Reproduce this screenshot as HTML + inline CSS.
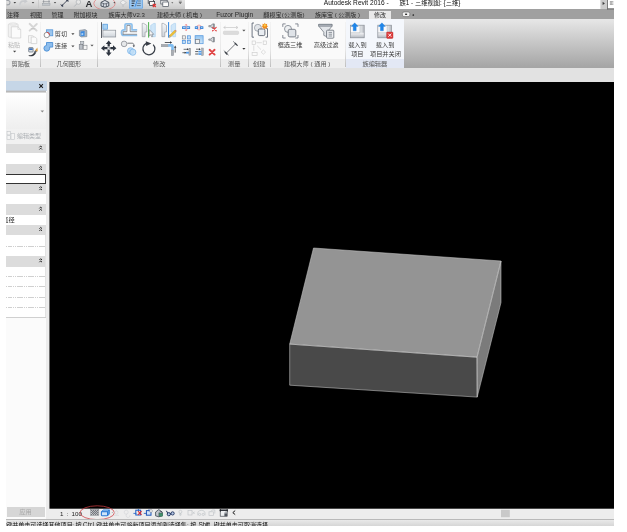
<!DOCTYPE html>
<html lang="zh-CN">
<head>
<meta charset="utf-8">
<title>Autodesk Revit 2016 - 族1 - 三维视图: {三维}</title>
<style>
html,body{margin:0;padding:0;background:#fff;}
body{width:627px;height:532px;overflow:hidden;position:relative;font-family:"Liberation Sans","Noto Sans CJK SC",sans-serif;font-size:6px;color:#222;-webkit-text-size-adjust:none;}
#app{position:absolute;left:0;top:0;width:627px;height:532px;overflow:hidden;background:#ececec;}
.abs{position:absolute;}
svg{position:absolute;overflow:visible;}
.t{position:absolute;white-space:nowrap;line-height:8px;height:8px;}
/* title bar */
#title{left:0;top:0;width:627px;height:9px;background:#fff;}
#qat{left:0;top:0;width:185px;height:9px;background:linear-gradient(#e4e4e4,#cbcbcb);}
#tabs{left:0;top:9px;width:627px;height:10.400px;background:#a0a0a0;}
#tabs .t{top:2px;color:#2a2a2a;font-size:6px;}
#ribbon{left:0;top:19.400px;width:404px;height:48.600px;background:#fafafa;}
#ribgrad{left:404px;top:19.400px;width:223px;height:48.600px;background:linear-gradient(#e7e7e7,#a4a4a4);}
#lblrow{left:0;top:59px;width:346px;height:9px;background:#eeeeee;}
#lblrow2{left:346px;top:59px;width:58px;height:9px;background:#e3e8f5;}
#fampanel{left:346px;top:19.400px;width:58px;height:39.600px;background:#f4f7fc;}
.lbl{top:60px;color:#555;font-size:6.2px;}
.rb{font-size:6.2px;color:#3c3c3c;}
.sep{position:absolute;top:22px;width:1px;height:45px;background:linear-gradient(to bottom,#f3f3f3 0%,#e9e9e9 60%,#d2d2d2 82%,#bebebe 100%);}
#optbar{left:0;top:68px;width:627px;height:14px;background:#e2e2e2;}
#view{left:49px;top:82px;width:578px;height:427px;background:#000;}
#panel{left:0;top:81px;width:47px;height:438px;background:#fbfbfb;}
#vcb{left:49px;top:509px;width:578px;height:10px;background:#ededed;}
#status{left:0;top:519px;width:627px;height:7px;background:linear-gradient(#e9e9e9,#d6d6d6);border-top:1px solid #b9b9b9;box-sizing:border-box;}
#chrome{position:absolute;left:0;top:0;width:627px;height:532px;filter:blur(0.35px);}
#stxt{left:0;top:520.600px;width:627px;height:8px;font-size:6.050px;color:#111;}
.mask{position:absolute;background:#fff;}
</style>
</head>
<body>
<div id="app">
  <svg style="left:0;top:0;" width="627" height="532" viewBox="0 0 627 532">
    <rect x="49.450" y="81.800" width="580" height="426.900" fill="#000"/>
    <polygon points="313.500,248 501,261 477,357.200 289.700,344.100" fill="#949494"/>
    <polygon points="289.700,344.100 477,357.200 477.200,397.100 289.700,385.200" fill="#494949"/>
    <polygon points="477,357.200 501,261 501,302.500 477.200,397.100" fill="#7b7b7b"/>
    <g fill="none" stroke="#c9c9c9" stroke-width="0.55" stroke-linejoin="round">
      <polygon points="313.500,248 501,261 477,357.200 289.700,344.100"/>
      <polygon points="289.700,344.100 477,357.200 477.200,397.100 289.700,385.200"/>
      <polygon points="477,357.200 501,261 501,302.500 477.200,397.100"/>
    </g>
  </svg>
  <div id="chrome">
  <div id="title" class="abs"></div>
  <div id="qat" class="abs"></div>
    <svg style="left:0;top:0;" width="200" height="12" viewBox="0 0 200 12">
    <!-- undo -->
    <path d="M6.400 0.400c2.600-.4 3.800 1 3.600 2.400-.2 1.400-1.600 2.200-3.400 2" fill="none" stroke="#9ea2a8" stroke-width="1.100"/>
    <path d="M13.500 1.900l1.300 1.500 1.300-1.500z" fill="#3c3c3c"/>
    <!-- redo (disabled) -->
    <path d="M20.200 5.200c-.6-2.600 1-4 3-4h2" fill="none" stroke="#c9cbce" stroke-width="1.700"/>
    <path d="M24.400-1.200l3.400 2.400-3.400 2.400z" fill="#c9cbce"/>
    <path d="M22 5.400c-1.200-.2-1.800-.8-1.800-1.800" fill="none" stroke="#d2d4d6" stroke-width="0.800"/>
    <path d="M31.700 1.900l1.300 1.500 1.300-1.500z" fill="#4a4a4a"/>
    <rect x="38" y="0" width="0.600" height="8" fill="#c2c2c2"/>
    <!-- measure -->
    <path d="M42.600 1.600h7.400" stroke="#868b92" stroke-width="0.600"/>
    <path d="M43.600.2v2.600M49 .2v2.600" stroke="#868b92" stroke-width="0.700"/>
    <rect x="42.600" y="3.300" width="7.400" height="1.900" fill="#c1c5ca" stroke="#90949a" stroke-width="0.400"/>
    <path d="M53.800 2.100l1.200 1.300 1.200-1.300z" fill="#4a4a4a"/>
    <!-- aligned dim -->
    <path d="M61.600 6l6.200-6.200" stroke="#3a4152" stroke-width="0.900"/>
    <path d="M60.600 4.400l2.600 2.600M66.200-1.200l2.800 2.800" stroke="#3a4152" stroke-width="0.700"/>
    <circle cx="62.200" cy="5.400" r="1" fill="#3a4152"/><circle cx="67.200" cy="0.400" r="1" fill="#3a4152"/>
    <!-- tag -->
    <circle cx="78.400" cy="2" r="2.300" fill="#e6e6e6" stroke="#aeb1b5" stroke-width="0.700"/>
    <path d="M76.800 3.800l-2.600 2.800" stroke="#aeb1b5" stroke-width="0.900"/>
    <!-- 3d view red ellipse -->
    <ellipse cx="104.500" cy="3.500" rx="10.700" ry="6.200" fill="none" stroke="#e07a7a" stroke-width="0.700"/>
    <!-- 3d house -->
    <path d="M101 2.400l3.900-2 3.900 2v3.600l-3.900 1.200-3.900-1.200z" fill="#d9dde3" stroke="#3d4552" stroke-width="0.900" stroke-linejoin="round"/>
    <path d="M103.400 3.800v2.800M106.400 3.800v2.800M101 2.600l3.900 1.400 3.900-1.400" fill="none" stroke="#3d4552" stroke-width="0.700"/>
    <path d="M113.400 2.300l1 1.100 1-1.100z" fill="#333"/>
    <!-- section -->
    <path d="M120 2.600l3-2.600 3.400 2.600-3.400 2.400z" fill="#ededed" stroke="#b0b3b8" stroke-width="0.600"/>
    <path d="M123 5v2" stroke="#b0b3b8" stroke-width="0.600"/>
    <!-- thin lines -->
    <rect x="129.400" y="-1" width="13.200" height="9.200" fill="#9cc7ef" stroke="#5c9ee0" stroke-width="0.700"/>
    <path d="M131.600 1h3.600M131.600 3.300h2.800M131.600 5.600h2" stroke="#2c3138" stroke-width="1.100"/>
    <path d="M137.800 1h3M137.200 3.300h3.600M136.600 5.600h4.200" stroke="#2c3138" stroke-width="0.500"/>
    <path d="M137.600-.6l-2.600 7.400" stroke="#2f80dc" stroke-width="0.800"/>
    <!-- close hidden -->
    <rect x="148.200" y="-1" width="5.200" height="4.200" fill="#eef0f2" stroke="#3a3f46" stroke-width="0.800"/>
    <rect x="149.600" y="1.400" width="5" height="4" fill="#f7f7f7" stroke="#3a3f46" stroke-width="0.800"/>
    <path d="M152.800 4l3 3M155.800 4l-3 3" stroke="#e03030" stroke-width="1.200"/>
    <!-- switch windows -->
    <rect x="160.800" y="-0.600" width="6.400" height="4.600" fill="#f3f4f5" stroke="#4d545e" stroke-width="0.700"/>
    <rect x="162.800" y="2" width="5.800" height="4.400" fill="#fbfbfb" stroke="#4d545e" stroke-width="0.700"/>
    <path d="M160.800.2h6.400" stroke="#4d545e" stroke-width="0.900"/>
    <path d="M171.300 2.300l1 1.100 1-1.100z" fill="#555"/>
    <!-- customize -->
    <path d="M178.800 1.200h3" stroke="#666" stroke-width="0.600"/>
    <path d="M178.600 2.300l1.700 1.700 1.700-1.700z" fill="#555"/>
  </svg>
  <div class="t" style="left:85.500px;top:-1.200px;font-size:9.600px;font-weight:bold;line-height:10px;height:10px;color:#2a2c2f;">A</div>

  <div class="t" style="left:323.800px;top:-1.100px;font-size:6.600px;color:#111;">Autodesk Revit 2016 -</div>
  <div class="t" style="left:399.5px;top:-1px;font-size:6.3px;color:#111;">族1 - 三维视图: {三维}</div>
  <div id="tabs" class="abs">
    <div class="abs" style="left:369px;top:1.700px;width:22px;height:8.700px;background:#e9e9e9;"></div>
    <div class="t" style="left:7px;">注释</div>
    <div class="t" style="left:30px;">视图</div>
    <div class="t" style="left:51.5px;">管理</div>
    <div class="t" style="left:73.5px;">附加模块</div>
    <div class="t" style="left:108.5px;">族库大师V2.3</div>
    <div class="t" style="left:157px;">建模大师 ( 机电 )</div>
    <div class="t" style="left:216.200px;font-size:6.600px;">Fuzor Plugin</div>
    <div class="t" style="left:263.200px;letter-spacing:0.200px;">翻模宝(公测版)</div>
    <div class="t" style="left:315px;">族库宝 ( 公测版 )</div>
    <div class="t" style="left:374px;">修改</div>
  </div>
  <svg style="left:0;top:0;" width="627" height="22" viewBox="0 0 627 22">
    <rect x="402.400" y="12" width="7.400" height="4.600" rx="1.600" fill="#f2f2f2" stroke="#555" stroke-width="0.500"/>
    <rect x="405.100" y="13.600" width="2" height="1.400" fill="#333"/>
    <circle cx="413.300" cy="15" r="0.850" fill="#222"/>
    <rect x="600.400" y="0" width="6.600" height="9" fill="#cbcbcb"/>
    <path d="M602.600 1.700l2.300 1.700-2.300 1.700z" fill="#3a3a3a"/>
    <rect x="607" y="0" width="7" height="9" fill="#fff"/>
    <rect x="607" y="0" width="0.700" height="9.400" fill="#444"/>
    <rect x="607" y="8.300" width="7" height="1.200" fill="#6a6a6a"/>
    <path d="M609.800 1.600h3.600M609.800 3h3.600M609.800 4.400h3.600M611 1.400v3.400" stroke="#8e8e8e" stroke-width="0.700"/>
  </svg>
  <div id="ribbon" class="abs"></div>
  <div id="ribgrad" class="abs"></div>
  <div id="fampanel" class="abs"></div>
  <div id="lblrow" class="abs"></div>
  <div id="lblrow2" class="abs"></div>
  <div class="t lbl" style="left:11.5px;">剪贴板</div>
  <div class="t lbl" style="left:56.5px;">几何图形</div>
  <div class="t lbl" style="left:153px;">修改</div>
  <div class="t lbl" style="left:228px;">测量</div>
  <div class="t lbl" style="left:253px;">创建</div>
  <div class="t lbl" style="left:284px;">建模大师 ( 通用 )</div>
  <div class="t lbl" style="left:362.5px;">族编辑器</div>
  <div class="sep" style="left:40px;"></div>
  <div class="sep" style="left:97px;"></div>
  <div class="sep" style="left:220px;"></div>
  <div class="sep" style="left:248px;"></div>
  <div class="sep" style="left:270px;"></div>
  <div class="sep" style="left:345px;"></div>
  <!-- ribbon text -->
  <div class="t" style="left:8px;top:41px;color:#b5b5b5;">粘贴</div>
  <div class="t rb" style="left:54.800px;top:30px;">剪切</div>
  <div class="t rb" style="left:54.800px;top:42px;">连接</div>
  <div class="t rb" style="left:277.700px;top:41px;">框选三维</div>
  <div class="t rb" style="left:313.800px;top:41px;">高级过滤</div>
  <div class="t rb" style="left:348.200px;top:41.300px;">载入到</div>
  <div class="t rb" style="left:351.200px;top:49.800px;">项目</div>
  <div class="t rb" style="left:375.800px;top:41.300px;">载入到</div>
  <div class="t rb" style="left:370px;top:49.800px;">项目并关闭</div>
    <!-- clipboard panel -->
  <svg style="left:0;top:0;" width="100" height="60" viewBox="0 0 100 60">
    <!-- paste (disabled) -->
    <rect x="8.3" y="23.8" width="9.8" height="13.4" rx="1" fill="#f2f2f2" stroke="#d4d4d4" stroke-width="0.7"/>
    <ellipse cx="13.2" cy="24" rx="3.6" ry="1.1" fill="#f4f4f4" stroke="#d4d4d4" stroke-width="0.6"/>
    <path d="M11.3 26.8h6.6l2.8 2.6v8.6h-9.4z" fill="#fbfbfb" stroke="#cfcfcf" stroke-width="0.7"/>
    <path d="M17.9 26.8v2.6h2.8" fill="none" stroke="#cfcfcf" stroke-width="0.6"/>
    <path d="M13 50.800l1.600 1.800 1.600-1.800z" fill="#444"/>
    <!-- cut X (disabled) -->
    <path d="M29.600 23.800l7 6.800M36.800 24l-7.200 6.600" stroke="#d6d6d6" stroke-width="1.900" stroke-linecap="round" fill="none"/>
    <path d="M31.200 28.800l3.600 0" stroke="#c4c4c4" stroke-width="1.200" fill="none"/>
    <!-- copy (disabled) -->
    <path d="M28.5 35.6h4.2l1.6 1.5v5.6h-5.8z" fill="#f6f6f6" stroke="#d0d0d0" stroke-width="0.7"/>
    <path d="M31.2 37h3.8l1.8 1.6v5h-5.6z" fill="#fbfbfb" stroke="#cccccc" stroke-width="0.7"/>
    <!-- match type -->
    <rect x="28.600" y="47.500" width="4.600" height="4.600" rx="0.800" fill="#a4aeb9" stroke="#66707b" stroke-width="0.600"/>
    <rect x="29.300" y="48.600" width="3.200" height="1.200" fill="#1f62c8"/>
    <rect x="29.300" y="50.300" width="3.200" height="1" fill="#eef1f4"/>
    <path d="M28.800 55c2 .8 4.200-.4 5.600-2.800l1.400 1.200c-1.800 2.600-4.600 3.600-7.200 2.400z" fill="#33373d"/>
    <path d="M33.600 52.600l1.800-2.600 1.600 1.200-1.800 2.600z" fill="#5d636b"/>
    <path d="M35.200 50.200l2.200-2.600.4 3.600-1.200.2z" fill="#d9a04a"/>
    <!-- cut geometry -->
    <rect x="46.400" y="29.800" width="6.400" height="6" fill="#9cc6ee" stroke="#4a8fd6" stroke-width="0.700"/>
    <circle cx="46.8" cy="35" r="2.7" fill="#ffffff" stroke="#6d6d6d" stroke-width="0.7"/>
    <path d="M46.8 32.3a2.7 2.7 0 0 1 2.7 2.7" fill="none" stroke="#e03a3a" stroke-width="0.8"/>
    <path d="M71.300 33.300l1.600 1.800 1.600-1.800z" fill="#444"/>
    <!-- join geometry -->
    <path d="M46.5 42.5h6.2v4.6h-3v1.2a2.9 2.9 0 1 1-3.2-2.9z" fill="#8dbdec" stroke="#3f86d2" stroke-width="0.800" stroke-linejoin="round"/>
    <path d="M71.300 45.400l1.600 1.800 1.600-1.800z" fill="#444"/>
    <!-- wall opening -->
    <path d="M79.4 30.4l5.6-.8 1.8 1v6l-5.4.4-2-1.2z" fill="#a8b4c2" stroke="#6f7c8c" stroke-width="0.6" stroke-linejoin="round"/>
    <path d="M80.6 31.6l4-.5v4.8l-4 .3z" fill="#3d8be0"/>
    <path d="M81.4 33.3l1.8-.2v2l-1.8.1z" fill="#a9d0f6"/>
    <!-- paint/split -->
    <rect x="80.6" y="41.4" width="3.2" height="2.8" fill="#c9ced4" stroke="#7d838a" stroke-width="0.55"/>
    <rect x="79.2" y="44.6" width="3.6" height="4.6" fill="#b9bec5" stroke="#70767d" stroke-width="0.55"/>
    <rect x="83.4" y="45.2" width="3.6" height="4.2" fill="#f4f4f4" stroke="#70767d" stroke-width="0.55"/>
    <path d="M90.400 44.800l1.600 1.800 1.600-1.800z" fill="#555"/>
  </svg>
  <!-- modify panel big icons -->
  <svg style="left:0;top:0;" width="420" height="60" viewBox="0 0 420 60">
    <defs>
      <linearGradient id="gGray" x1="0" y1="0" x2="0" y2="1"><stop offset="0" stop-color="#f4f6f8"/><stop offset="1" stop-color="#cfd4da"/></linearGradient>
      <linearGradient id="gBlue" x1="0" y1="0" x2="0" y2="1"><stop offset="0" stop-color="#94c5f0"/><stop offset="1" stop-color="#cfe6f9"/></linearGradient>
      <linearGradient id="gGray2" x1="0" y1="0" x2="0" y2="1"><stop offset="0" stop-color="#d9dde2"/><stop offset="1" stop-color="#bcc1c8"/></linearGradient>
      <linearGradient id="gBlue2" x1="0" y1="0" x2="1" y2="1"><stop offset="0" stop-color="#6aaae8"/><stop offset="1" stop-color="#d4eafa"/></linearGradient>
    </defs>
    <!-- align -->
    <rect x="101.1" y="22.2" width="0.9" height="15.8" fill="#4a4f57"/>
    <rect x="102.9" y="24.2" width="4.6" height="5" fill="#a9d2f2" stroke="#4f97de" stroke-width="0.7"/>
    <rect x="102.9" y="30.2" width="12.8" height="6.8" fill="url(#gGray)" stroke="#8b9097" stroke-width="0.7"/>
    <!-- offset -->
    <path d="M137.200 29.900h-5.200v-4.900q0-1.200-1.200-1.200h-4.600q-1.200 0-1.200 1.200v4.900h-1.200q-2.300 0-2.300 2.800 0 2.800 2.300 2.800h13.400" fill="#fdfeff" stroke="#8dc0ec" stroke-width="1.700" stroke-linejoin="round"/>
    <path d="M123 31.700h3.900v-6.300h3.300v6.300h6.900" fill="none" stroke="#60666e" stroke-width="0.700"/>
    <path d="M122.800 34.300h14.300" fill="none" stroke="#60666e" stroke-width="0.700"/>
    <path d="M123.100 31.700v2.600" stroke="#60666e" stroke-width="0.600"/>
    <!-- move -->
    <g fill="#2e3540">
      <path d="M108.700 40.500l2.900 3.400h-1.800v2.700h-2.200v-2.700h-1.800z"/>
      <path d="M108.700 55.900l2.900-3.400h-1.800v-2.700h-2.200v2.700h-1.800z"/>
      <path d="M101 48.200l3.400-2.900v1.800h2.700v2.200h-2.700v1.800z"/>
      <path d="M116.400 48.200l-3.400-2.900v1.800h-2.700v2.200h2.700v1.800z"/>
    </g>
    <rect x="107.700" y="47.200" width="2" height="2" fill="#f4f4f4" stroke="#59606a" stroke-width="0.500"/>
    <!-- copy -->
    <circle cx="124.1" cy="43.9" r="2.8" fill="#e6e8ea" stroke="#7b8087" stroke-width="0.7"/>
    <path d="M127.4 43.2h4.6c1.2 0 1.8.6 1.8 1.6v1" fill="none" stroke="#3e434a" stroke-width="0.7"/>
    <path d="M132.6 45.6l1.2 1.7 1.2-1.7z" fill="#3e434a"/>
    <circle cx="130.600" cy="50.800" r="3.100" fill="#c0def7" stroke="#74b0e8" stroke-width="0.700"/>
    <circle cx="132.800" cy="52.200" r="3.100" fill="#c0def7" fill-opacity="0.850" stroke="#74b0e8" stroke-width="0.700"/>
    <!-- mirror pick axis -->
    <path d="M142.2 23.4h1.5l3.1 2v6.6h-1.7v4.7h-2.9z" fill="url(#gGray)" stroke="#8f949b" stroke-width="0.6" stroke-linejoin="round"/>
    <path d="M155.3 23.4h-1.5l-3.1 2v6.6h1.7v4.7h2.9z" fill="#cfe6f8" stroke="#a5cdee" stroke-width="0.6" stroke-linejoin="round"/>
    <rect x="148" y="22.1" width="1.1" height="15.5" fill="#5cb85c"/>
    <path d="M149.3 29.6v6.4l1.5-1.3 1 2.3 1-.5-1-2.2h2z" fill="#f4f4f4" stroke="#6d7279" stroke-width="0.55" stroke-linejoin="round"/>
    <!-- mirror draw axis -->
    <path d="M161.9 23.4h1.5l3.1 2v6.6h-1.7v4.7h-2.9z" fill="url(#gGray)" stroke="#8f949b" stroke-width="0.6" stroke-linejoin="round"/>
    <path d="M175.6 23.4h-1.5l-3.1 2v6.6h1.7v4.7h2.9z" fill="#cfe6f8" stroke="#a5cdee" stroke-width="0.6" stroke-linejoin="round"/>
    <rect x="168" y="22.1" width="1.1" height="15.5" fill="#3f8fe4"/>
    <path d="M169 37.2l.6-2 5-4.8 1.4 1.4-5 4.8z" fill="#f2c230" stroke="#b98a1c" stroke-width="0.4" stroke-linejoin="round"/>
    <path d="M174.6 30.4l.8-.7 1.4 1.4-.8.7z" fill="#d98f6a"/>
    <path d="M169 37.2l.6-2 1.4 1.4z" fill="#f6e6c8" stroke="#555" stroke-width="0.3"/>
    <!-- rotate -->
    <path d="M146.2 43.4a6 6 0 1 0 7 1.2" fill="none" stroke="#383e47" stroke-width="1.25"/>
    <path d="M145.8 41.2l5.6 2.2-5.2 2.6z" fill="#383e47"/>
    <!-- trim/extend corner -->
    <rect x="161.3" y="44.3" width="7" height="2.5" fill="#a9adb3" stroke="#8a8e94" stroke-width="0.4"/>
    <path d="M168.2 44.1h3.4c1.4 0 2.2.8 2.2 2.2v3.8h-2.6v-3.4h-3z" fill="#7ebcf0"/>
    <rect x="171.2" y="50" width="2.5" height="5.7" fill="#a9adb3" stroke="#8a8e94" stroke-width="0.4"/>
    <path d="M164.800 42.500h5.600" stroke="#30353c" stroke-width="0.800"/><path d="M170 41.300l2.200 1.200-2.200 1.200z" fill="#30353c"/>
    <path d="M175.200 52.600v-5.400" stroke="#30353c" stroke-width="0.800"/><path d="M174 47.800l1.200-2.200 1.200 2.200z" fill="#30353c"/>
    <!-- split element -->
    <path d="M186.200 24.300v6.400" stroke="#f29c9c" stroke-width="1.200"/>
    <path d="M185 25.4l1.2-1.3 1.2 1.3M185 29.6l1.2 1.3 1.2-1.3" fill="none" stroke="#f29c9c" stroke-width="0.800"/>
    <rect x="182" y="26.2" width="8.1" height="2.7" rx="0.5" fill="#3f88da"/>
    <rect x="183" y="27" width="2.4" height="1.1" fill="#9fcaf2"/><rect x="187" y="27" width="2.2" height="1.1" fill="#9fcaf2"/>
    <rect x="185.8" y="26.2" width="0.8" height="2.7" fill="#f5c6c6"/>
    <!-- split with gap -->
    <circle cx="199" cy="27.500" r="2.500" fill="#fbdcdc" stroke="#f2a6a6" stroke-width="0.800"/>
    <rect x="194.8" y="26.2" width="3.3" height="2.7" rx="0.5" fill="#3f88da"/><rect x="199.9" y="26.2" width="3.5" height="2.7" rx="0.5" fill="#3f88da"/>
    <rect x="195.7" y="27" width="1.4" height="1.1" fill="#9fcaf2"/><rect x="201" y="27" width="1.4" height="1.1" fill="#9fcaf2"/>
    <!-- unpin -->
    <path d="M208.8 25.6h2.4l1-1.6h1.8v4.4h-1.8l-1-1.6h-2.4z" fill="#d5d8dc" stroke="#6a6f76" stroke-width="0.600" stroke-linejoin="round"/>
    <path d="M214 23.600v5.200" stroke="#6a6f76" stroke-width="0.900"/>
    <path d="M212.6 27.4l3.6 3.4M216.2 27.4l-3.6 3.4" stroke="#e24848" stroke-width="1.2" stroke-linecap="round"/>
    <!-- array -->
    <rect x="182.3" y="35.8" width="3.2" height="3.2" fill="#f0f0f0" stroke="#85898f" stroke-width="0.7"/>
    <rect x="187.3" y="35.8" width="3.2" height="3.2" fill="#bfdcf6" stroke="#4a90dc" stroke-width="0.7"/>
    <rect x="182.3" y="40.4" width="3.2" height="3.2" fill="#bfdcf6" stroke="#4a90dc" stroke-width="0.7"/>
    <rect x="187.3" y="40.4" width="3.2" height="3.2" fill="#bfdcf6" stroke="#4a90dc" stroke-width="0.7"/>
    <!-- scale -->
    <rect x="195.1" y="35.7" width="8" height="8" fill="url(#gBlue)" stroke="#4f94de" stroke-width="0.7"/>
    <rect x="195.4" y="39.5" width="4.2" height="4" fill="#f2f2f2" stroke="#767b82" stroke-width="0.7"/>
    <!-- pin -->
    <path d="M208.8 39h2.4l1-1.6h1.8v4.4h-1.8l-1-1.6h-2.4z" fill="#d5d8dc" stroke="#6a6f76" stroke-width="0.600" stroke-linejoin="round"/>
    <path d="M214 37v5.200" stroke="#6a6f76" stroke-width="0.900"/>
    <!-- trim single -->
    <rect x="188.9" y="48.2" width="1.9" height="7.2" fill="#aeb2b8" stroke="#888c92" stroke-width="0.4"/>
    <path d="M183.6 49.3h4" stroke="#30353c" stroke-width="0.7"/><path d="M187 48.3l1.8 1-1.8 1z" fill="#30353c"/>
    <rect x="186" y="51.8" width="2.9" height="1.8" fill="#4f9cea"/>
    <path d="M182.4 52.7h3.4" stroke="#30353c" stroke-width="0.7"/><path d="M184.6 51.7l1.8 1-1.8 1z" fill="#30353c"/>
    <!-- trim multiple -->
    <rect x="201.5" y="48" width="1.9" height="7.6" fill="#aeb2b8" stroke="#888c92" stroke-width="0.4"/>
    <path d="M196 49.2h3.6" stroke="#30353c" stroke-width="0.7"/><path d="M199 48.2l1.8 1-1.8 1z" fill="#30353c"/>
    <rect x="198.4" y="50.8" width="3.1" height="1.7" fill="#4f9cea"/><rect x="198.4" y="53.2" width="3.1" height="1.7" fill="#4f9cea"/>
    <path d="M195.2 51.6h3M195.2 54h3" stroke="#30353c" stroke-width="0.8"/>
    <!-- delete -->
    <path d="M209.6 49.8l5 4.8M214.6 49.8l-5 4.8" stroke="#e04343" stroke-width="1.9" stroke-linecap="round"/>
    <!-- measure (disabled) -->
    <path d="M224 27.500h13.600" stroke="#c4c4c4" stroke-width="0.650"/>
    <path d="M225.6 26.2l-2 1.3 2 1.3M236 26.2l2 1.3-2 1.3" fill="none" stroke="#c4c4c4" stroke-width="0.650"/>
    <rect x="223.4" y="31.2" width="15.2" height="3.2" rx="0.8" fill="#dcdcdc" stroke="#cacaca" stroke-width="0.500"/>
    <path d="M242.300 29.800l1.600 1.800 1.600-1.800z" fill="#555"/>
    <!-- aligned dimension -->
    <path d="M226.400 53l9.200-9.200" stroke="#3d4249" stroke-width="0.700"/>
    <path d="M223.800 50.600l4.800 4.600M233.200 41.400l4.800 4.600" stroke="#3d4249" stroke-width="0.650"/>
    <path d="M225.400 51.600l2.400 2.400-.9.900-2.400-2.400zM234.400 43.400l2.400 2.400.9-.9-2.400-2.400z" fill="#3d4249"/>
    <path d="M242.300 48l1.600 1.800 1.600-1.800z" fill="#333"/>
    <!-- create group -->
    <path d="M254 23h-1.9v14.2h1.9M265.6 28.6h1.9v8.6h-1.9" fill="none" stroke="#4b5566" stroke-width="0.8"/>
    <circle cx="257.9" cy="27.8" r="3.5" fill="#e2e5e9" stroke="#8a919b" stroke-width="0.7"/>
    <rect x="258.3" y="29" width="6.6" height="6.6" rx="1.3" fill="#e9edf2" stroke="#49525f" stroke-width="0.8"/>
    <g transform="translate(264.800 25.400) scale(0.860) translate(-264.800 -25.400)"><path d="M264.8 22.3l.9 1.7 1.9-.5-.5 1.9 1.7.9-1.7.9.5 1.9-1.9-.5-.9 1.7-.9-1.7-1.9.5.5-1.9-1.7-.9 1.7-.9-.5-1.9 1.9.5z" fill="#f08a1c"/>
    <circle cx="264.8" cy="25.4" r="1.3" fill="#fbd34a"/></g>
    <!-- create similar (disabled) -->
    <g fill="none" stroke="#cdcdcd" stroke-width="0.650">
      <rect x="252.1" y="41" width="3.4" height="3.4"/><rect x="263.2" y="41" width="3.4" height="3.4"/>
      <path d="M256.4 42.7h5.4M253.8 45.4v5.4M257.2 45.8l3.8 3.8"/>
      <rect x="252.1" y="52.4" width="5" height="3.2"/>
      <path d="M263.4 50l2.2 2.1-2.2 2.1-2.2-2.1z"/>
    </g>
    <!-- box select 3d -->
    <g fill="none" stroke="#737a84" stroke-width="0.850">
      <path d="M285.600 23.900h-2.800v3M295.200 23.900h2.800v3M285.600 38h-2.800v-3M295.200 38h2.800v-3"/>
      <circle cx="288" cy="28.900" r="3.500" fill="#eef0f2" stroke="#7f8690"/>
      <rect x="288.200" y="29.300" width="7.600" height="7.600" rx="1.600" fill="#dfe3e8" stroke="#6a717b"/>
    </g>
    <!-- advanced filter -->
    <path d="M318.800 24.300h13.200v1.900l-5 6v4.600l-3.200-1.400v-3.200l-5-6z" fill="#e3e6ea" stroke="#6d747d" stroke-width="0.750" stroke-linejoin="round"/>
    <rect x="318.800" y="24.300" width="13.200" height="1.900" fill="#a9afb7" stroke="#6d747d" stroke-width="0.500"/>
    <rect x="326.600" y="30.200" width="7.200" height="8" rx="0.800" fill="#eceef1" stroke="#676e77" stroke-width="0.800"/>
    <path d="M328.600 32.400h3.400M328.600 34.200h3.400M328.600 36h3.400" stroke="#676e77" stroke-width="0.700"/>
    <!-- load into project -->
    <defs>
      <linearGradient id="gLh" x1="0" y1="0" x2="1" y2="0"><stop offset="0" stop-color="#eceef1"/><stop offset="1" stop-color="#b3b8bf"/></linearGradient>
      <linearGradient id="gLv" x1="0" y1="0" x2="0" y2="1"><stop offset="0" stop-color="#f3f4f6"/><stop offset="1" stop-color="#b3b8bf"/></linearGradient>
    </defs>
    <g>
      <rect x="350.600" y="25.200" width="13.600" height="12.600" fill="#fbfbfc"/>
      <rect x="360" y="25.200" width="4.200" height="12.600" fill="url(#gLh)"/>
      <path d="M350.600 32.800h9.400l4.200 0v5h-13.600z" fill="url(#gLv)"/>
      <path d="M360 25.200v7.600h-9.400" fill="none" stroke="#a2a8af" stroke-width="0.500"/>
      <rect x="350.600" y="25.200" width="13.600" height="12.600" fill="none" stroke="#8a9097" stroke-width="0.700"/>
      <path d="M354.700 22.800l3.500 3.600h-2v4.400h-3v-4.400h-2z" fill="#1f86ea" stroke="#1a6fc6" stroke-width="0.300"/>
    </g>
    <!-- load into project and close -->
    <g transform="translate(27.200 0)">
      <rect x="350.600" y="25.200" width="13.600" height="12.600" fill="#fbfbfc"/>
      <rect x="360" y="25.200" width="4.200" height="12.600" fill="url(#gLh)"/>
      <path d="M350.600 32.800h9.400l4.200 0v5h-13.600z" fill="url(#gLv)"/>
      <path d="M360 25.200v7.600h-9.400" fill="none" stroke="#a2a8af" stroke-width="0.500"/>
      <rect x="350.600" y="25.200" width="13.600" height="12.600" fill="none" stroke="#8a9097" stroke-width="0.700"/>
      <path d="M354.700 22.800l3.500 3.600h-2v4.400h-3v-4.400h-2z" fill="#1f86ea" stroke="#1a6fc6" stroke-width="0.300"/>
    </g>
    <rect x="386.600" y="32" width="6.400" height="6.400" rx="0.800" fill="#dc3b3b" stroke="#b52a2a" stroke-width="0.400"/>
    <path d="M388.300 33.700l3 3M391.300 33.700l-3 3" stroke="#fff" stroke-width="0.900"/>
  </svg>
<!--RIBBON-ICONS-->

  <div id="optbar" class="abs"></div>
  <div id="panel" class="abs"></div>
    <div class="abs" style="left:6px;top:81px;width:41px;height:9.600px;background:#c6d6e7;"></div>
  <div class="abs" style="left:6px;top:92.600px;width:39.600px;height:36.400px;background:linear-gradient(#ffffff,#eeeeee);box-shadow:0 0 0 0.500px #dcdcdc;"></div>
  <div class="abs" style="left:6px;top:129px;width:41px;height:14.500px;background:#f1f1f1;"></div>
  <div class="t" style="left:17px;top:131.500px;color:#a9adb1;font-size:6px;">编辑类型</div>
  <div class="abs" style="left:6px;top:143.500px;width:40px;height:9.600px;background:#dcdcdc;"></div>
  <div class="abs" style="left:6px;top:153.100px;width:40px;height:10.600px;background:#fff;"></div>
  <div class="abs" style="left:6px;top:163.700px;width:40px;height:10.300px;background:#dcdcdc;"></div>
  <div class="abs" style="left:4px;top:174px;width:41.700px;height:9.600px;background:#fff;border:0.600px solid #333;box-sizing:border-box;"></div>
  <div class="abs" style="left:6px;top:183.700px;width:40px;height:10.300px;background:#dcdcdc;"></div>
  <div class="abs" style="left:6px;top:194px;width:40px;height:10.200px;background:#fff;"></div>
  <div class="abs" style="left:6px;top:204.200px;width:40px;height:10.800px;background:#dcdcdc;"></div>
  <div class="abs" style="left:6px;top:215px;width:40px;height:9.500px;background:#fff;"></div>
  <div class="t" style="left:2.300px;top:215.800px;font-size:6.200px;color:#222;">直径</div>
  <div class="abs" style="left:6px;top:224.500px;width:40px;height:10.800px;background:#dcdcdc;"></div>
  <div class="abs" style="left:6px;top:235.300px;width:40px;height:20.700px;background:#fff;"></div>
  <div class="abs" style="left:6px;top:246px;width:40px;height:1px;background:repeating-linear-gradient(90deg,#d0d0d0 0 1.500px,transparent 1.500px 2.200px);"></div>
  <div class="abs" style="left:6px;top:256px;width:40px;height:10.600px;background:#dcdcdc;"></div>
  <div class="abs" style="left:6px;top:266.600px;width:40px;height:51px;background:#fff;"></div>
  <div class="abs" style="left:6px;top:276px;width:40px;height:1px;background:repeating-linear-gradient(90deg,#d0d0d0 0 1.500px,transparent 1.500px 2.200px);"></div>
  <div class="abs" style="left:6px;top:286px;width:40px;height:1px;background:repeating-linear-gradient(90deg,#d0d0d0 0 1.500px,transparent 1.500px 2.200px);"></div>
  <div class="abs" style="left:6px;top:297px;width:40px;height:1px;background:repeating-linear-gradient(90deg,#d0d0d0 0 1.500px,transparent 1.500px 2.200px);"></div>
  <div class="abs" style="left:6px;top:307px;width:40px;height:1px;background:repeating-linear-gradient(90deg,#d0d0d0 0 1.500px,transparent 1.500px 2.200px);"></div>
  <div class="abs" style="left:6px;top:317.200px;width:40px;height:1px;background:#d0d0d0;"></div>
  <div class="abs" style="left:45px;top:235px;width:1px;height:82px;background:#e2e2e2;"></div>
  <div class="abs" style="left:46px;top:92px;width:3px;height:427px;background:#ececec;"></div>
  <div class="abs" style="left:7px;top:507px;width:37.700px;height:9.600px;background:#d6d6d6;"></div>
  <div class="t" style="left:19.300px;top:507.600px;color:#a8a8a8;font-size:6.200px;">应用</div>
  <svg style="left:0;top:0;" width="60" height="532" viewBox="0 0 60 532">
    <path d="M39.300 84.200l3.600 3.600M42.900 84.200l-3.600 3.600" stroke="#1e1e1e" stroke-width="1.100"/>
    <rect x="6" y="90.600" width="40" height="1.800" fill="#b8b8b8"/>
    <path d="M40.500 110.600l1.800 1.900 1.800-1.900z" fill="#8a8a8a"/>
    <!-- edit type icon -->
    <g fill="#f4f4f4" stroke="#c2c5c9" stroke-width="0.600">
      <rect x="7" y="131.300" width="3.400" height="3.600"/><rect x="7" y="135.700" width="3.400" height="3.600"/>
      <rect x="11" y="133.300" width="3.600" height="6"/>
    </g>
    <!-- chevrons -->
    <g fill="none" stroke="#1c1c1c" stroke-width="0.950">
      <path d="M39.400 147.300l1.300-1.300 1.300 1.300M39.400 149.500l1.300-1.300 1.300 1.300"/>
      <path d="M39.400 167.700l1.300-1.300 1.300 1.300M39.400 169.900l1.300-1.300 1.300 1.300"/>
      <path d="M39.400 187.900l1.300-1.300 1.300 1.300M39.400 190.100l1.300-1.300 1.300 1.300"/>
      <path d="M39.400 208.400l1.300-1.300 1.300 1.300M39.400 210.600l1.300-1.300 1.300 1.300"/>
      <path d="M39.400 228.700l1.300-1.300 1.300 1.300M39.400 230.900l1.300-1.300 1.300 1.300"/>
      <path d="M39.400 260l1.300-1.300 1.300 1.300M39.400 262.200l1.300-1.300 1.300 1.300"/>
    </g>
  </svg>

  <div id="vcb" class="abs"></div>
    <div class="t" style="left:60px;top:509.700px;font-size:6.200px;color:#222;word-spacing:1.500px;">1 : 100</div>
  <svg style="left:0;top:0;" width="627" height="532" viewBox="0 0 627 532">
    <!-- scroll thumb -->
    <rect x="501" y="509.800" width="8.800" height="7.400" fill="#c9c9c9"/>
    <!-- detail level -->
    <rect x="90.600" y="509.300" width="8.200" height="6.200" fill="#d9dbde" stroke="#767b81" stroke-width="0.500"/>
    <g fill="#4d5258">
      <rect x="91.200" y="509.900" width="1" height="1"/><rect x="93.200" y="509.900" width="1" height="1"/><rect x="95.200" y="509.900" width="1" height="1"/><rect x="97.200" y="509.900" width="1" height="1"/>
      <rect x="92.200" y="510.900" width="1" height="1"/><rect x="94.200" y="510.900" width="1" height="1"/><rect x="96.200" y="510.900" width="1" height="1"/>
      <rect x="91.200" y="511.900" width="1" height="1"/><rect x="93.200" y="511.900" width="1" height="1"/><rect x="95.200" y="511.900" width="1" height="1"/><rect x="97.200" y="511.900" width="1" height="1"/>
      <rect x="92.200" y="512.900" width="1" height="1"/><rect x="94.200" y="512.900" width="1" height="1"/><rect x="96.200" y="512.900" width="1" height="1"/>
      <rect x="91.200" y="513.900" width="1" height="1"/><rect x="93.200" y="513.900" width="1" height="1"/><rect x="95.200" y="513.900" width="1" height="1"/><rect x="97.200" y="513.900" width="1" height="1"/>
    </g>
    <!-- visual style -->
    <path d="M101.400 511.800l1.800-1.900h6.200l-1.800 1.900z" fill="#8fc0f0" stroke="#2a7ad6" stroke-width="0.800" stroke-linejoin="round"/>
    <path d="M107.600 511.800l1.800-1.900v4l-1.800 1.900z" fill="#5ea2e8" stroke="#2a7ad6" stroke-width="0.800" stroke-linejoin="round"/>
    <rect x="101.400" y="511.800" width="6.200" height="3.900" rx="0.600" fill="#cfe5f9" stroke="#2a7ad6" stroke-width="1.100"/>
    <path d="M111.600 512.200l.7.800.7-.8z" fill="#777"/>
    <!-- red ellipse -->
    <ellipse cx="97.200" cy="512.700" rx="17.200" ry="6.900" fill="none" stroke="#cf3d42" stroke-width="0.750"/>
    <!-- faded sun path / shadows -->
    <g fill="none" stroke="#d3d5d8" stroke-width="0.600">
      <circle cx="116.400" cy="512.600" r="1.600"/><path d="M114 515.400h5M116.400 509.800v1M118.600 510.800l-.6.600"/>
      <circle cx="126.200" cy="512.200" r="2"/><path d="M127.400 513.600a2 2 0 1 0 2.600 1.600"/>
    </g>
    <!-- crop view -->
    <rect x="135.800" y="510.200" width="4.800" height="4.800" fill="none" stroke="#1f5fc4" stroke-width="1"/>
    <path d="M133.400 513.400h3M138.400 509v2" stroke="#1f5fc4" stroke-width="0.800"/>
    <path d="M138 511.200l3.600 3.600M141.600 511.200l-3.600 3.600" stroke="#e03030" stroke-width="1.100"/>
    <!-- show crop -->
    <rect x="146.400" y="510.600" width="4.600" height="4.600" fill="#cfe2f8" stroke="#1f56b8" stroke-width="1"/>
    <path d="M143.800 513.400h3M149 509.200v2" stroke="#1f56b8" stroke-width="0.800"/>
    <circle cx="151" cy="511" r="1.400" fill="#fff" stroke="#6f757c" stroke-width="0.500"/>
    <!-- lock 3d -->
    <path d="M155.600 512l3.200-2.400 3.400 2.400v3.800l-3.400 1-3.200-1z" fill="#c3c9d0" stroke="#39424e" stroke-width="0.800" stroke-linejoin="round"/>
    <path d="M158.800 512.600v4" stroke="#39424e" stroke-width="0.500"/>
    <rect x="159.200" y="513.200" width="3.400" height="3" fill="#3f8f6a" stroke="#2c6a4c" stroke-width="0.400"/>
    <path d="M159.900 513.200v-.9a1 1 0 0 1 2 0v.9" fill="none" stroke="#39424e" stroke-width="0.600"/>
    <!-- temp hide glasses -->
    <path d="M166.400 510.800l1.800 3.200h2.600l1-1.400 1 1.400" fill="none" stroke="#1c2f5a" stroke-width="1"/>
    <circle cx="168.800" cy="514.200" r="1.600" fill="#b9cbe8" stroke="#1c2f5a" stroke-width="0.900"/>
    <circle cx="172.600" cy="513.400" r="1.600" fill="#b9cbe8" stroke="#1c2f5a" stroke-width="0.900"/>
    <!-- bulb -->
    <g fill="none" stroke="#c2c5c9" stroke-width="0.700">
      <circle cx="180.400" cy="511.800" r="1.500"/><path d="M179.800 513.600h1.200v1.600h-1.200z"/>
      <rect x="188" y="510.600" width="4" height="4.400"/><path d="M192.600 511.600l2 2.400M194.600 511.600l-2 2.400"/>
      <path d="M197.800 515.400v-2.400c0-1.600 1.400-2.600 3.600-2.600s3.600 1 3.600 2.600v2.400"/><circle cx="199.600" cy="514.400" r="1.100"/><circle cx="203.200" cy="514.400" r="1.100"/>
      <rect x="209" y="511.800" width="4.600" height="3.600"/><path d="M210.600 511.800l1.600-1.800h2.600v3.600"/>
    </g>
    <!-- constraints -->
    <rect x="220.200" y="510.200" width="7" height="6" fill="#eef0f2" stroke="#30353c" stroke-width="0.600"/>
    <path d="M219.600 510.200h8.200" stroke="#24282e" stroke-width="1.300"/>
    <path d="M220.400 509.200v2.400M227.200 509.200v2.400" stroke="#24282e" stroke-width="1"/>
    <rect x="224.400" y="513.400" width="2.600" height="2.800" fill="#4f555d"/>
    <path d="M225 513.400v-.8a.7.700 0 0 1 1.400 0v.8" fill="none" stroke="#4f555d" stroke-width="0.500"/>
    <path d="M235.200 510.600l-2.400 2 2.400 2" fill="none" stroke="#1a1a1a" stroke-width="1"/>
  </svg>

  <div id="status" class="abs"></div>
    <div id="stxt" class="abs">
    <span class="t" style="right:620.800px;">单击可进行选择; 按 Tab </span>
    <span class="t" style="left:6.200px;">键并单击可选择其他项目</span>
    <span class="t" style="left:72.200px;">; 按</span>
    <span class="t" style="left:83px;letter-spacing:0.350px;font-size:6.400px;">Ctrl</span>
    <span class="t" style="left:96.200px;">键并单击可将新项目添加到选择集</span>
    <span class="t" style="left:186.900px;">; 按</span>
    <span class="t" style="left:198.600px;letter-spacing:-0.350px;font-size:6.400px;">Shift</span>
    <span class="t" style="left:213.700px;">键并单击可取消选择。</span>
  </div>

  </div>
  <div class="mask" style="left:0;top:0;width:6px;height:532px;"></div>
  <div class="mask" style="left:614px;top:0;width:13px;height:532px;"></div>
  <div class="mask" style="left:0;top:526px;width:627px;height:6px;"></div>
</div>
</body>
</html>
